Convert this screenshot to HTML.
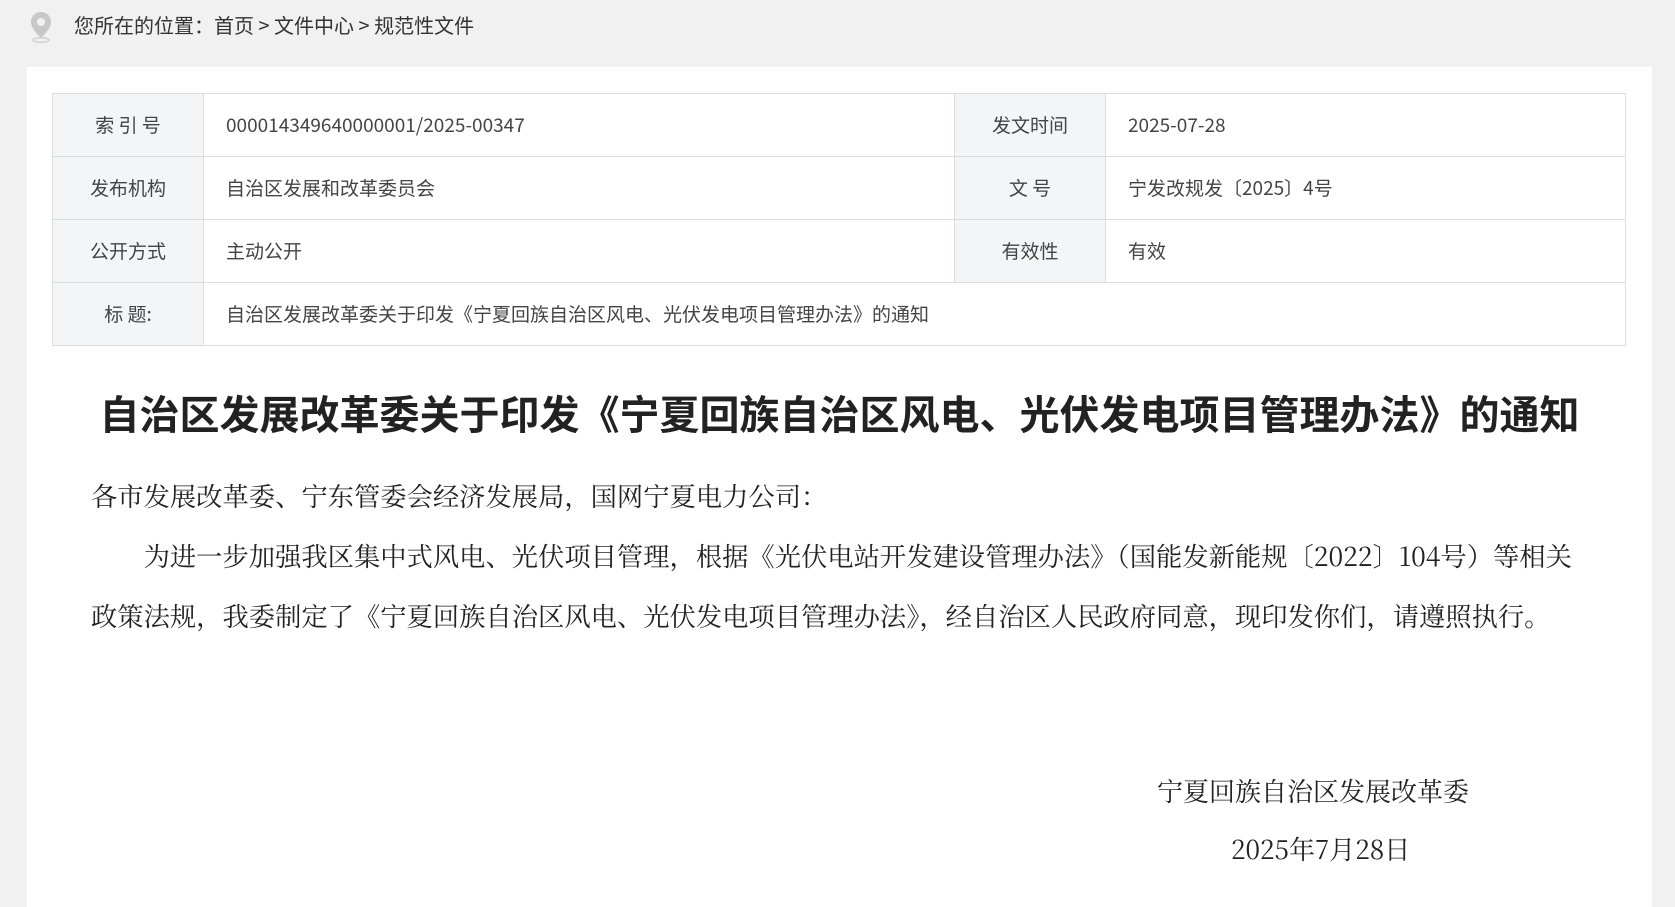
<!DOCTYPE html>
<html><head><meta charset="utf-8"><style>
body{margin:0;width:1675px;height:895px;background:#f1f1f1;overflow:hidden;font-family:"Noto Sans CJK SC","Liberation Sans",sans-serif;color:#333}
.bc{position:absolute;left:74px;top:10px;font-size:20px;color:#333;line-height:30px}
.pin{position:absolute;left:29px;top:11px}
.card{position:absolute;left:27px;top:67px;width:1625px;height:840px;background:#fff}
table{position:absolute;left:25px;top:26px;width:1574px;border-collapse:collapse;font-size:19px;color:#444}
td{border:1px solid #ddd;height:62px;padding:0 0 0 22px;line-height:24px;vertical-align:middle}
td.l{background:#f4f5f7;text-align:center;padding:0;width:150px}
h1{position:absolute;left:0;width:1625px;top:320px;margin:0;text-align:center;font-size:40px;font-weight:bold;color:#222;line-height:50px}
.body{position:absolute;left:64px;top:398px;width:1488px;font-family:"Noto Serif CJK SC","Liberation Serif",serif;font-size:26.3px;line-height:60px;color:#222}
.body p{margin:0}
.sig{position:absolute;font-family:"Noto Serif CJK SC","Liberation Serif",serif;font-size:26px;color:#222;line-height:30px}
</style></head><body>
<svg class="pin" width="24" height="32" viewBox="0 0 24 32"><path d="M12 1C6 1 2 5.5 2 11c0 7 10 16 10 16s10-9 10-16C22 5.5 18 1 12 1z" fill="#c8c8c8"/><circle cx="12" cy="11" r="4" fill="#f1f1f1"/><ellipse cx="12" cy="29" rx="8" ry="2.3" fill="none" stroke="#d0d0d0" stroke-width="1.5"/></svg>
<div class="bc">您所在的位置：首页 &gt; 文件中心 &gt; 规范性文件</div>
<div class="card">
<table>
<tr><td class="l">索 引 号</td><td style="width:728px">000014349640000001/2025-00347</td><td class="l">发文时间</td><td>2025-07-28</td></tr>
<tr><td class="l">发布机构</td><td>自治区发展和改革委员会</td><td class="l">文 号</td><td>宁发改规发〔2025〕4号</td></tr>
<tr><td class="l">公开方式</td><td>主动公开</td><td class="l">有效性</td><td>有效</td></tr>
<tr><td class="l">标 题:</td><td colspan="3">自治区发展改革委关于印发《宁夏回族自治区风电、光伏发电项目管理办法》的通知</td></tr>
</table>
<h1>自治区发展改革委关于印发《宁夏回族自治区风电、光伏发电项目管理办法》的通知</h1>
<div class="body">
<p>各市发展改革委、宁东管委会经济发展局，国网宁夏电力公司：</p>
<p style="text-indent:2em">为进一步加强我区集中式风电、光伏项目管理，根据《光伏电站开发建设管理办法》（国能发新能规〔2022〕104号）等相关政策法规，我委制定了《宁夏回族自治区风电、光伏发电项目管理办法》，经自治区人民政府同意，现印发你们，请遵照执行。</p>
</div>
<div class="sig" style="left:1130px;top:709px">宁夏回族自治区发展改革委</div>
<div class="sig" style="left:1204px;top:767px">2025年7月28日</div>
</div>
</body></html>
